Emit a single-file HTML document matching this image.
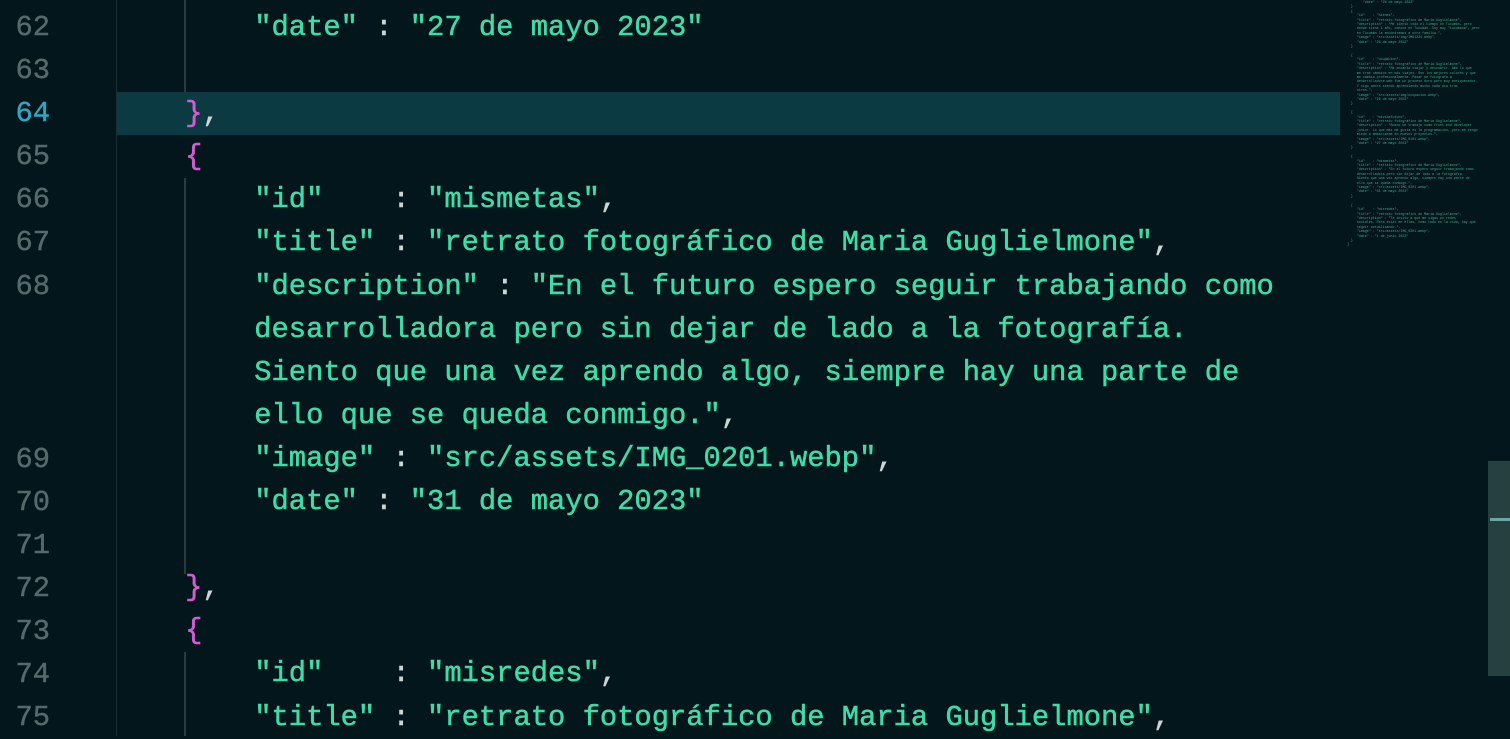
<!DOCTYPE html>
<html><head><meta charset="utf-8"><style>
html,body{margin:0;padding:0;width:1510px;height:736px;overflow:hidden;background:#03161b;}
.ed{position:absolute;left:0;top:0;width:1510px;height:736px;}
.gut{position:absolute;left:116px;top:0;width:1px;height:736px;background:#1c2f33;}
.hl{position:absolute;left:116px;top:92px;width:1224px;height:43px;background:#0b3a42;}
.ln{position:absolute;left:0;width:50px;text-align:right;font:28.8px "Liberation Mono",monospace;color:#56696b;line-height:43.1px;-webkit-text-stroke:0.4px #56696b;}
.ln.a{color:#2fa6c2;-webkit-text-stroke:0.4px #2fa6c2;}
.code{position:absolute;left:116px;font:28.8px "Liberation Mono",monospace;color:#3fdca8;line-height:43.1px;white-space:pre;-webkit-text-stroke:0.5px currentColor;}
.p{color:#d25cd2}.c{color:#c9d6d4}
.guide{position:absolute;left:184px;width:2px;background:#2a3b3e;}
.mm{position:absolute;left:1345px;top:0;width:140px;font:3.3px "Liberation Mono",monospace;color:#3fbf95;line-height:4.4px;white-space:pre;opacity:.9}
.sb{position:absolute;left:1488px;top:461px;width:22px;height:215px;background:#25403f;}
.sbl{position:absolute;left:1490px;top:518px;width:20px;height:3px;background:#6aa6a6;}
</style></head><body><div class="ed">
<div class="hl"></div>
<div class="gut"></div>
<div class="guide" style="top:0;height:92px"></div>
<div class="guide" style="top:178px;height:396px"></div>
<div class="guide" style="top:652px;height:84px"></div>
<div class="ln" style="top:6px">62</div>
<div class="ln" style="top:49px">63</div>
<div class="ln a" style="top:92px">64</div>
<div class="ln" style="top:135px">65</div>
<div class="ln" style="top:178px">66</div>
<div class="ln" style="top:221px">67</div>
<div class="ln" style="top:265px">68</div>
<div class="ln" style="top:438px">69</div>
<div class="ln" style="top:481px">70</div>
<div class="ln" style="top:524px">71</div>
<div class="ln" style="top:567px">72</div>
<div class="ln" style="top:610px">73</div>
<div class="ln" style="top:653px">74</div>
<div class="ln" style="top:696px">75</div>
<div class="code" style="top:6px">        "date" <span class="c">:</span> "27 de mayo 2023"

    <span class="p">}</span><span class="c">,</span>
    <span class="p">{</span>
        "id"    <span class="c">:</span> "mismetas"<span class="c">,</span>
        "title" <span class="c">:</span> "retrato fotográfico de Maria Guglielmone"<span class="c">,</span>
        "description" <span class="c">:</span> "En el futuro espero seguir trabajando como
        desarrolladora pero sin dejar de lado a la fotografía.
        Siento que una vez aprendo algo, siempre hay una parte de
        ello que se queda conmigo."<span class="c">,</span>
        "image" <span class="c">:</span> "src/assets/IMG_0201.webp"<span class="c">,</span>
        "date" <span class="c">:</span> "31 de mayo 2023"

    <span class="p">}</span><span class="c">,</span>
    <span class="p">{</span>
        "id"    <span class="c">:</span> "misredes"<span class="c">,</span>
        "title" <span class="c">:</span> "retrato fotográfico de Maria Guglielmone"<span class="c">,</span></div>
<div class="mm">         "date" : "26 de mayo 2023"
   }
   {
      "id"    : "bienes",
      "title" : "retrato fotográfico de Maria Guglielmone",
      "description" : "Me siento todo el tiempo en Tucumán, pero
      donde tiene 1 año, conoce en Tucumán. Soy muy "tucumana", pero
      en Tucumán la encontramos a otra familia.",
      "image" : "src/assets/img/IMG1234.webp",
      "date" : "26 de mayo 2023"
   }

   {
      "id"    : "ocupacion",
      "title" : "retrato fotográfico de Maria Guglielmone",
      "description" : "Me encanta viajar y descubrir. Amo lo que
      me trae cambios en mis viajes. Son los mejores colores y que
      me cambia profesionalmente. Pasar de fotógrafa a
      desarrolladora web fue un proceso duro pero muy enriquecedor.
      Y sigo ahora siendo aprendiendo mucho cada día tras
      otros.",
      "image" : "src/assets/img/ocupacion.webp",
      "date" : "26 de mayo 2023"
   }

   {
      "id"    : "mividafuturo",
      "title" : "retrato fotográfico de Maria Guglielmone",
      "description" : "Busco un trabajo como front-end developer
      junior. Lo que más me gusta es la programación, pero me tengo
      miedo a embarcarme en nuevos proyectos.",
      "image" : "src/assets/IMG_0101.webp",
      "date" : "27 de mayo 2023"
   }

   {
      "id"    : "mismetas",
      "title" : "retrato fotográfico de Maria Guglielmone",
      "description" : "En el futuro espero seguir trabajando como
      desarrolladora pero sin dejar de lado a la fotografía.
      Siento que una vez aprendo algo, siempre hay una parte de
      ello que se queda conmigo.",
      "image" : "src/assets/IMG_0201.webp",
      "date" : "31 de mayo 2023"
   }

   {
      "id"    : "misredes",
      "title" : "retrato fotográfico de Maria Guglielmone",
      "description" : "Te invito a que me sigas en redes
      sociales. Para estar en ellas, como todo en la vida, hay que
      seguir actualizando.",
      "image" : "src/assets/IMG_0301.webp",
      "date" : "1 de junio 2023"
   }
 ]</div>
<div class="sb"></div><div class="sbl"></div>
</div></body></html>
